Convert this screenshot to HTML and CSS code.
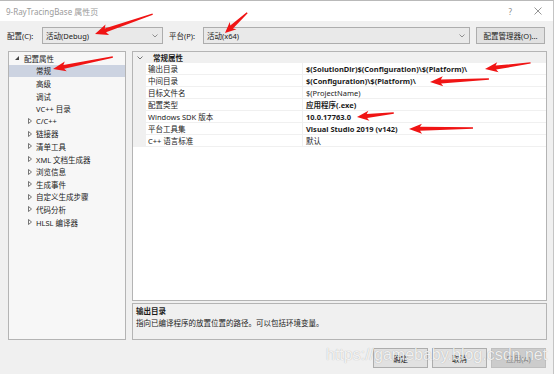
FILE: index.html
```html
<!DOCTYPE html>
<html>
<head>
<meta charset="utf-8">
<link rel="stylesheet" href="styles.css">
</head>
<body>
<div class="win">
  <div class="titlebar">
    <span class="title">9-RayTracingBase 属性页</span>
    <span class="tb-btns">
      <span class="help">?</span>
      <svg class="close" width="8" height="8" viewBox="0 0 8 8"><path d="M0.5 0.5 L7.5 7.5 M7.5 0.5 L0.5 7.5" stroke="#8a8a8a" stroke-width="0.9" fill="none"/></svg>
    </span>
  </div>

  <div class="toolbar">
    <span class="lbl lbl1">配置(C):</span>
    <div class="combo c1"><span>活动(Debug)</span><svg class="chev" width="6" height="4" viewBox="0 0 6 4"><path d="M0.5 0.5 L3 3 L5.5 0.5" stroke="#777" stroke-width="0.8" fill="none"/></svg></div>
    <span class="lbl lbl2">平台(P):</span>
    <div class="combo c2"><span>活动(x64)</span><svg class="chev" width="6" height="4" viewBox="0 0 6 4"><path d="M0.5 0.5 L3 3 L5.5 0.5" stroke="#777" stroke-width="0.8" fill="none"/></svg></div>
    <div class="btn mgr">配置管理器(O)...</div>
  </div>

  <div class="main">
    <div class="tree">
      <div class="node root"><svg class="exp-open" width="4" height="4" viewBox="0 0 4 4"><polygon points="0,4 4,4 4,0" fill="#444"/></svg><span>配置属性</span></div>
      <div class="node leaf selected">常规</div>
      <div class="node leaf">高级</div>
      <div class="node leaf">调试</div>
      <div class="node leaf">VC++ 目录</div>
      <div class="node group"><svg class="exp" width="4" height="6" viewBox="0 0 4 6"><polygon points="0.5,0.5 3.5,3 0.5,5.5" fill="none" stroke="#555" stroke-width="0.8"/></svg><span>C/C++</span></div>
      <div class="node group"><svg class="exp" width="4" height="6" viewBox="0 0 4 6"><polygon points="0.5,0.5 3.5,3 0.5,5.5" fill="none" stroke="#555" stroke-width="0.8"/></svg><span>链接器</span></div>
      <div class="node group"><svg class="exp" width="4" height="6" viewBox="0 0 4 6"><polygon points="0.5,0.5 3.5,3 0.5,5.5" fill="none" stroke="#555" stroke-width="0.8"/></svg><span>清单工具</span></div>
      <div class="node group"><svg class="exp" width="4" height="6" viewBox="0 0 4 6"><polygon points="0.5,0.5 3.5,3 0.5,5.5" fill="none" stroke="#555" stroke-width="0.8"/></svg><span>XML 文档生成器</span></div>
      <div class="node group"><svg class="exp" width="4" height="6" viewBox="0 0 4 6"><polygon points="0.5,0.5 3.5,3 0.5,5.5" fill="none" stroke="#555" stroke-width="0.8"/></svg><span>浏览信息</span></div>
      <div class="node group"><svg class="exp" width="4" height="6" viewBox="0 0 4 6"><polygon points="0.5,0.5 3.5,3 0.5,5.5" fill="none" stroke="#555" stroke-width="0.8"/></svg><span>生成事件</span></div>
      <div class="node group"><svg class="exp" width="4" height="6" viewBox="0 0 4 6"><polygon points="0.5,0.5 3.5,3 0.5,5.5" fill="none" stroke="#555" stroke-width="0.8"/></svg><span>自定义生成步骤</span></div>
      <div class="node group"><svg class="exp" width="4" height="6" viewBox="0 0 4 6"><polygon points="0.5,0.5 3.5,3 0.5,5.5" fill="none" stroke="#555" stroke-width="0.8"/></svg><span>代码分析</span></div>
      <div class="node group"><svg class="exp" width="4" height="6" viewBox="0 0 4 6"><polygon points="0.5,0.5 3.5,3 0.5,5.5" fill="none" stroke="#555" stroke-width="0.8"/></svg><span>HLSL 编译器</span></div>
    </div>

    <div class="right">
      <div class="grid">
        <div class="cat"><svg class="cat-chev" width="6" height="4" viewBox="0 0 6 4"><path d="M0.5 0.5 L3 3 L5.5 0.5" stroke="#555" stroke-width="0.8" fill="none"/></svg><span>常规属性</span></div>
        <div class="row"><span class="gut"></span><span class="name">输出目录</span><span class="val b">$(SolutionDir)$(Configuration)\$(Platform)\</span></div>
        <div class="row"><span class="gut"></span><span class="name">中间目录</span><span class="val b">$(Configuration)\$(Platform)\</span></div>
        <div class="row"><span class="gut"></span><span class="name">目标文件名</span><span class="val">$(ProjectName)</span></div>
        <div class="row"><span class="gut"></span><span class="name">配置类型</span><span class="val b">应用程序(.exe)</span></div>
        <div class="row"><span class="gut"></span><span class="name">Windows SDK 版本</span><span class="val b">10.0.17763.0</span></div>
        <div class="row"><span class="gut"></span><span class="name">平台工具集</span><span class="val b">Visual Studio 2019 (v142)</span></div>
        <div class="row"><span class="gut"></span><span class="name">C++ 语言标准</span><span class="val">默认</span></div>
      </div>
      <div class="desc">
        <div class="desc-title">输出目录</div>
        <div class="desc-text">指向已编译程序的放置位置的路径。可以包括环境变量。</div>
      </div>
    </div>
  </div>

  <div class="footer">
    <div class="btn fbtn">确定</div>
    <div class="btn fbtn">取消</div>
    <div class="btn fbtn disabled">应用(A)</div>
  </div>
</div>

<div class="watermark">https://gamebaby.blog.csdn.net</div>

<svg class="arrows" width="554" height="374" viewBox="0 0 554 374">
  <g fill="#f01414">
    <polygon transform="translate(95,34) rotate(161)" points="-61,-0.7 -11,-2 -13,-5.5 0,0 -13,5.5 -11,2 -61,0.7"/>
    <polygon transform="translate(225,33) rotate(137.7)" points="-30,-0.7 -9,-2 -11,-5 0,0 -11,5 -9,2 -30,0.7"/>
    <polygon transform="translate(53,69) rotate(168.7)" points="-61,-0.7 -11,-2 -13,-5 0,0 -13,5 -11,2 -61,0.7"/>
    <polygon transform="translate(485,69) rotate(172.4)" points="-46,-0.7 -11,-2 -13,-5 0,0 -13,5 -11,2 -46,0.7"/>
    <polygon transform="translate(430,82) rotate(177.1)" points="-59,-0.7 -11,-2 -13,-5 0,0 -13,5 -11,2 -59,0.7"/>
    <polygon transform="translate(357,117) rotate(173.8)" points="-37,-0.7 -10,-2 -12,-5 0,0 -12,5 -10,2 -37,0.7"/>
    <polygon transform="translate(409,129) rotate(179.1)" points="-64,-0.7 -11,-2 -13,-5 0,0 -13,5 -11,2 -64,0.7"/>
  </g>
</svg>
</body>
</html>
```

FILE: styles.css
```css
html, body {
  margin: 0;
  padding: 0;
  width: 554px;
  height: 374px;
  overflow: hidden;
  background: #f0f0f0;
}

body {
  position: relative;
}

.win {
  width: 554px;
  height: 374px;
  box-sizing: border-box;
  border-top: 1px solid #b9b9b9;
  border-right: 1px solid #c4c4c4;
  background: #f0f0f0;
  font-family: "Noto Sans", "Noto Sans CJK SC", sans-serif;
  font-size: 7.5px;
  color: #1b1b1b;
  display: flex;
  flex-direction: column;
}

.titlebar {
  height: 20px;
  background: #ffffff;
  display: flex;
  align-items: center;
  justify-content: space-between;
  padding-left: 6px;
}

.title {
  font-size: 8px;
  color: #9a9a9a;
}

.tb-btns {
  display: flex;
  align-items: center;
  gap: 22px;
  padding-right: 11px;
}

.help {
  font-size: 8px;
  color: #8a8a8a;
}

.toolbar {
  display: flex;
  align-items: center;
  height: 17px;
  margin-top: 6px;
  padding-left: 7px;
}

.lbl1 {
  width: 35px;
}

.lbl2 {
  width: 34px;
  margin-left: 6px;
}

.combo {
  height: 17px;
  box-sizing: border-box;
  border: 1px solid #adadad;
  background: #e9e9e9;
  display: flex;
  align-items: center;
  justify-content: space-between;
  padding: 0 4px 0 3px;
}

.c1 {
  width: 121px;
}

.c2 {
  width: 267px;
}

.btn {
  box-sizing: border-box;
  border: 1px solid #adadad;
  background: #e1e1e1;
  display: flex;
  align-items: center;
  justify-content: center;
}

.mgr {
  width: 69px;
  height: 17px;
  margin-left: 6px;
}

.main {
  display: flex;
  margin-top: 7px;
  padding-left: 8px;
  height: 289px;
}

.tree {
  width: 118px;
  box-sizing: border-box;
  border: 1px solid #b4b4b4;
  background: #f7f7f7;
}

.node {
  height: 12.6px;
  display: flex;
  align-items: center;
  white-space: nowrap;
}

.root {
  padding-left: 6px;
}

.root .exp-open {
  margin-right: 5px;
}

.leaf {
  padding-left: 27px;
}

.group {
  padding-left: 19px;
}

.group .exp {
  margin-right: 4px;
}

.selected {
  background: #ccd3e1;
}

.right {
  width: 415px;
  margin-left: 6px;
  display: flex;
  flex-direction: column;
}

.grid {
  height: 250px;
  box-sizing: border-box;
  border: 1px solid #b4b4b4;
  background: #ffffff;
}

.cat {
  height: 11px;
  background: #f0f0f0;
  display: flex;
  align-items: center;
  font-weight: bold;
  padding-left: 4px;
}

.cat-chev {
  margin-right: 10px;
}

.row {
  height: 12px;
  display: flex;
  align-items: stretch;
  white-space: nowrap;
}

.gut {
  width: 13px;
  background: #f0f0f0;
}

.name {
  width: 157px;
  padding-left: 2px;
  display: flex;
  align-items: center;
  border-bottom: 1px solid #f0f0f0;
  border-right: 1px solid #f0f0f0;
  box-sizing: border-box;
}

.val {
  flex: 1;
  padding-left: 3px;
  display: flex;
  align-items: center;
  border-bottom: 1px solid #f0f0f0;
  box-sizing: border-box;
}

.b {
  font-weight: bold;
}

.desc {
  margin-top: 2px;
  height: 37px;
  box-sizing: border-box;
  border: 1px solid #b4b4b4;
  background: #f0f0f0;
  padding: 2px 3px;
}

.desc-title {
  font-weight: bold;
  line-height: 11px;
}

.desc-text {
  line-height: 12px;
}

.footer {
  display: flex;
  justify-content: flex-end;
  gap: 4px;
  margin-top: 8px;
  padding-right: 7px;
}

.fbtn {
  width: 55px;
  height: 20px;
}

.fbtn.disabled {
  background: #cccccc;
  border-color: #bfbfbf;
  color: #838383;
}

.watermark {
  position: absolute;
  left: 326px;
  top: 346px;
  font-family: "Liberation Sans", Arial, sans-serif;
  font-size: 16px;
  color: rgba(255, 255, 255, 0.85);
  text-shadow: 0 0 1px rgba(0, 0, 0, 0.3);
  white-space: nowrap;
  pointer-events: none;
}

.arrows {
  position: absolute;
  left: 0;
  top: 0;
  pointer-events: none;
}
```
